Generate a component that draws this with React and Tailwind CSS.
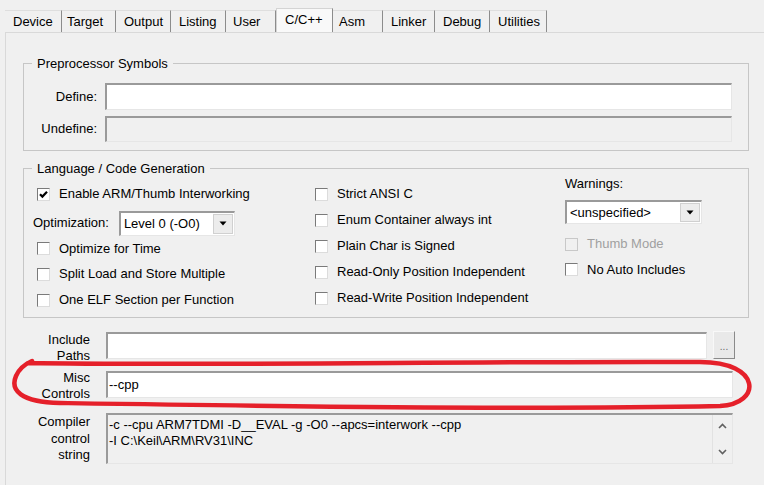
import React from 'react';

const tabs = [
  { name: 'Device', cls: 'w-[57px] pl-[8px]' },
  { name: 'Target', cls: 'w-[54px] pl-[5px]' },
  { name: 'Output', cls: 'w-[55px] pl-[8px]' },
  { name: 'Listing', cls: 'w-[55px] pl-[8px]' },
  { name: 'User', cls: 'w-[50px] pl-[7px]' },
  { name: 'C/C++', cls: 'w-[57px] pl-[8px]', active: true },
  { name: 'Asm', cls: 'w-[50px] pl-[6px]' },
  { name: 'Linker', cls: 'w-[52px] pl-[8px]' },
  { name: 'Debug', cls: 'w-[55px] pl-[8px]' },
  { name: 'Utilities', cls: 'w-[57px] pl-[8px]' },
];

const sunken =
  'border-t-2 border-l-2 border-b border-r border-t-[#9a9a9a] border-l-[#9a9a9a] border-b-[#e6e6e6] border-r-[#e6e6e6]';

const CheckBox = ({ checked, disabled }) => (
  <span
    className={
      disabled
        ? 'w-[13px] h-[13px] shrink-0 border border-[#c8c8c8] bg-[#f0f0f0]'
        : 'w-[13px] h-[13px] shrink-0 border-t border-l border-b border-r border-t-[#7a7a7a] border-l-[#7a7a7a] border-b-[#dcdcdc] border-r-[#dcdcdc] bg-white flex items-center justify-center'
    }
  >
    {checked && (
      <svg width="9" height="9" viewBox="0 0 9 9">
        <path d="M1 4.2 L3.4 6.6 L8 1.8" fill="none" stroke="#000" strokeWidth="2.2" />
      </svg>
    )}
  </span>
);

const Check = ({ label, checked, disabled, h = 'h-[26px]' }) => (
  <div className={`flex items-center gap-[9px] ${h}`}>
    <CheckBox checked={checked} disabled={disabled} />
    <span className={disabled ? 'text-[#a0a0a0]' : 'text-black'}>{label}</span>
  </div>
);

const Combo = ({ value, width }) => (
  <div className={`flex items-stretch bg-white ${sunken} ${width}`}>
    <span className="flex-1 pl-[3px] flex items-center">{value}</span>
    <span className="w-[20px] m-[1px] bg-[#ececec] border border-[#d0d0d0] flex items-center justify-center">
      <svg width="8" height="5" viewBox="0 0 8 5">
        <path d="M0.5 0.5 H7.5 L4 4.5 Z" fill="#000" />
      </svg>
    </span>
  </div>
);

export default function App() {
  return (
    <div className="relative w-[764px] h-[485px] overflow-hidden bg-[#f0f0f0] text-[13px] text-black font-['Liberation_Sans',Arial,sans-serif]">
      {/* Tabs */}
      <div className="flex items-end h-[32px] pl-[5px]">
        {tabs.map((t) =>
          t.active ? (
            <div
              key={t.name}
              className={`h-[24px] leading-[22px] bg-[#f9f9f9] border-t border-l border-r border-t-[#d4d4d4] border-l-[#d4d4d4] border-r-[#8c8c8c] ${t.cls}`}
            >
              {t.name}
            </div>
          ) : (
            <div
              key={t.name}
              className={`h-[22px] leading-[21px] border-t border-r border-t-[#dedede] border-r-[#8c8c8c] ${t.cls}`}
            >
              {t.name}
            </div>
          )
        )}
      </div>

      {/* Panel */}
      <div className="ml-[5px] h-[453px] border-t border-l border-[#d9d9d9] bg-[#f0f0f0] flex flex-col">
        {/* Preprocessor Symbols */}
        <fieldset className="ml-[17px] mt-[23px] w-[726px] border border-[#c6c6c6] pt-[12px] pb-[8px]">
          <legend className="ml-[8px] px-[5px] leading-[15px]">Preprocessor Symbols</legend>
          <div className="flex items-center gap-[8px]">
            <span className="w-[73px] text-right">Define:</span>
            <div className={`w-[627px] h-[27px] bg-white ${sunken}`} />
          </div>
          <div className="flex items-center gap-[8px] mt-[6px]">
            <span className="w-[73px] text-right">Undefine:</span>
            <div className={`w-[627px] h-[26px] bg-[#f0f0f0] ${sunken}`} />
          </div>
        </fieldset>

        {/* Language / Code Generation */}
        <fieldset className="ml-[17px] mt-[10px] w-[726px] border border-[#c6c6c6] pt-[5px] pb-[4px]">
          <legend className="ml-[8px] px-[5px] leading-[15px]">Language / Code Generation</legend>
          <div className="flex items-start pl-[13px]">
            <div className="w-[278px] flex flex-col">
              <Check label="Enable ARM/Thumb Interworking" checked />
              <div className="flex items-center h-[29px] pt-[3px] -ml-[4px] gap-[10px]">
                <span>Optimization:</span>
                <Combo value="Level 0 (-O0)" width="w-[116px] h-[25px]" />
              </div>
              <Check label="Optimize for Time" h="h-[25px]" />
              <Check label="Split Load and Store Multiple" />
              <Check label="One ELF Section per Function" />
            </div>
            <div className="w-[250px] flex flex-col">
              <Check label="Strict ANSI C" />
              <Check label="Enum Container always int" />
              <Check label="Plain Char is Signed" />
              <Check label="Read-Only Position Independent" />
              <Check label="Read-Write Position Independent" />
            </div>
            <div className="flex flex-col -mt-[6px]">
              <span className="h-[18px] leading-[18px]">Warnings:</span>
              <div className="mt-[7px]">
                <Combo value="<unspecified>" width="w-[137px] h-[24px]" />
              </div>
              <div className="mt-[7px]">
                <Check label="Thumb Mode" disabled />
              </div>
              <Check label="No Auto Includes" h="h-[25px]" />
            </div>
          </div>
        </fieldset>

        {/* Include / Misc / Compiler */}
        <div className="ml-[18px] mt-[14px] flex flex-col">
          <div className="flex items-start h-[27px] gap-[16px]">
            <span className="w-[66px] text-right leading-[16px]">Include<br />Paths</span>
            <div className={`w-[601px] h-[27px] bg-white ${sunken}`} />
            <button className="-ml-[10px] w-[22px] h-[28px] -mt-[1px] bg-[#e9e9e9] border border-t-[#f8f8f8] border-l-[#f8f8f8] border-b-[#8a8a8a] border-r-[#8a8a8a] text-[10px] text-[#6a6a6a] leading-[20px] pt-[4px]">
              ...
            </button>
          </div>
          <div className="flex items-start h-[27px] gap-[16px] mt-[12px]">
            <span className="w-[66px] text-right leading-[16px] -mt-[1px]">Misc<br />Controls</span>
            <div className={`w-[627px] h-[27px] bg-white flex items-center pl-[1px] ${sunken}`}>--cpp</div>
          </div>
          <div className="flex items-start gap-[16px] mt-[15px]">
            <span className="w-[66px] text-right leading-[16.5px] pt-[1px]">Compiler<br />control<br />string</span>
            <div className={`w-[627px] h-[51px] bg-[#f0f0f0] flex ${sunken}`}>
              <div className="flex-1 pl-[1px] pt-[2px] leading-[16px] whitespace-pre">
                {'-c --cpu ARM7TDMI -D__EVAL -g -O0 --apcs=interwork --cpp\n-I C:\\Keil\\ARM\\RV31\\INC'}
              </div>
              <div className="w-[20px] border-l border-[#e2e2e2] flex flex-col items-center justify-between py-[8px]">
                <svg width="9" height="6" viewBox="0 0 9 6">
                  <path d="M1 5 L4.5 1.5 L8 5" fill="none" stroke="#606060" strokeWidth="1.6" />
                </svg>
                <svg width="9" height="6" viewBox="0 0 9 6">
                  <path d="M1 1 L4.5 4.5 L8 1" fill="none" stroke="#606060" strokeWidth="1.6" />
                </svg>
              </div>
            </div>
          </div>
        </div>
      </div>

      {/* Red hand-drawn annotation */}
      <svg className="absolute inset-0 pointer-events-none" width="764" height="485" viewBox="0 0 764 485">
        <path
          d="M28 363 C 200 366, 480 361, 700 362 C 762 362, 762 404, 720 406 C 520 410, 260 406, 60 403 C 20 402, 10 390, 16 376 C 19 369, 23 365, 32 361"
          fill="none"
          stroke="#e5202a"
          strokeWidth="4.5"
          strokeLinecap="round"
        />
      </svg>
    </div>
  );
}
